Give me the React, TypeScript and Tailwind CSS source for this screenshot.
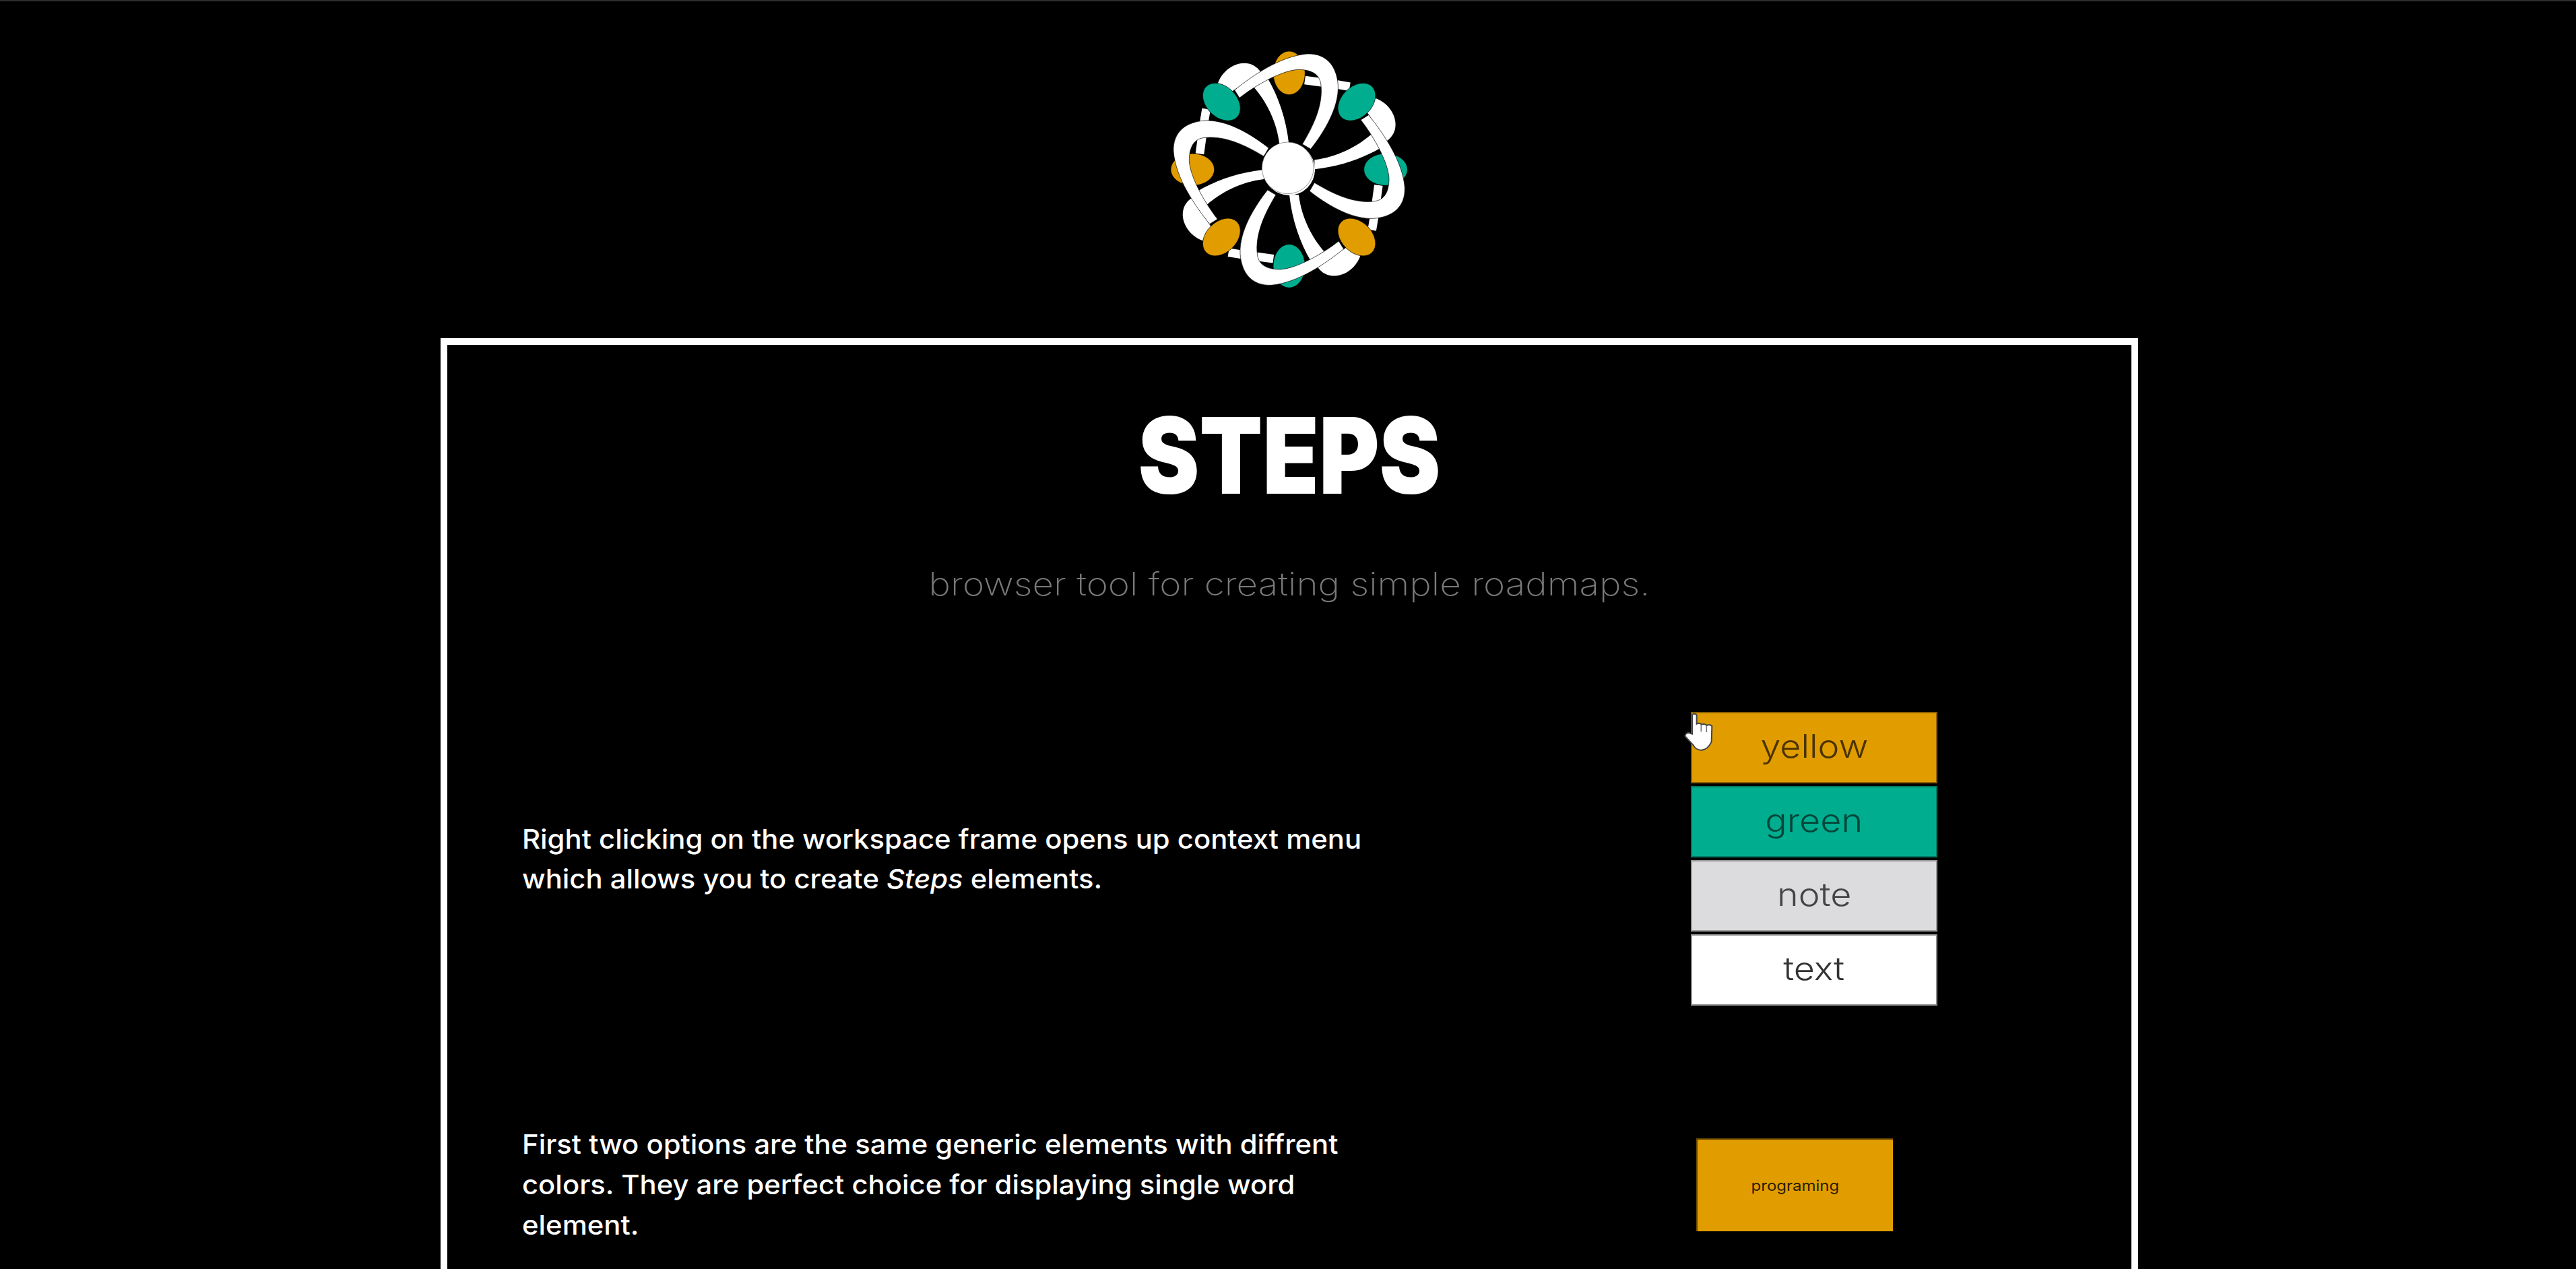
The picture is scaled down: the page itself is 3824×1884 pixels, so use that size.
const ORANGE = "#e19c00";
const GREEN = "#00ad8f";
const FONT = "font-['Inter',sans-serif]";

const units = [
  { angle: 0, half: ORANGE, diag: GREEN },
  { angle: 90, half: GREEN, diag: GREEN },
  { angle: 180, half: GREEN, diag: ORANGE },
  { angle: 270, half: ORANGE, diag: ORANGE },
];

function Logo() {
  return (
    <svg width="420" height="400" viewBox="0 0 1260 1200" className="block">
      {units.map((u) => (
        <g key={"b" + u.angle} transform={`rotate(${u.angle} 641 605)`}>
          <path d="M322,226 C350,135 465,95 515,172 L385,258 Z" fill="#fff" />
          <path d="M485,240 C538,300 586,390 598,492 L640,492 C628,380 593,280 545,198 Z" fill="#fff" />
          <path d="M272,335 L262,395 L243,535" fill="none" stroke="#fff" strokeWidth="38" />
        </g>
      ))}
      {units.map((u) => (
        <g key={"h" + u.angle} transform={`rotate(${u.angle} 641 605)`}>
          <ellipse cx="641" cy="175" rx="71" ry="97" fill={u.half} stroke="#000" strokeWidth="2" />
        </g>
      ))}
      {units.map((u) => (
        <g key={"f" + u.angle} transform={`rotate(${u.angle} 641 605)`}>
          <path
            d="M700,492 C743,420 796,320 782,222 C774,174 730,160 680,160 C610,164 500,224 420,286 L398,251 C480,186 600,101 720,90 C812,86 854,150 859,230 C864,330 794,442 737,514 Z"
            fill="#fff"
            stroke="#000"
            strokeWidth="2"
          />
        </g>
      ))}
      {units.map((u) => (
        <g key={"d" + u.angle} transform={`rotate(${u.angle} 641 605)`}>
          <ellipse cx="340" cy="304" rx="97" ry="68" transform="rotate(45 340 304)" fill={u.diag} stroke="#000" strokeWidth="2" />
        </g>
      ))}
      <circle cx="641" cy="605" r="115" fill="#fff" />
      <circle cx="635" cy="598" r="115" fill="#fff" stroke="#666" strokeWidth="2" />
    </svg>
  );
}

function Hand() {
  return (
    <svg width="60" height="80" viewBox="0 0 180 240" className="absolute left-[-20px] top-[-16px]">
      <path
        d="M60,140 L60,55 Q70,45 80,55 L80,95 Q92,88 102,98 Q115,92 125,102 Q138,95 148,105 L146,175 Q130,210 100,212 Q75,210 65,190 L28,150 Q30,135 45,135 Z"
        fill="#fff"
        stroke="#444"
        strokeWidth="6"
      />
      <path d="M100,100 L100,130 M124,104 L124,132" stroke="#777" strokeWidth="5" fill="none" />
    </svg>
  );
}

function MenuItem({ label, bg, border, text, children }: { label: string; bg: string; border: string; text: string; children?: React.ReactNode }) {
  return (
    <div className={`relative flex h-[106px] items-center justify-center border-2 pb-[4px] ${bg} ${border} ${text} text-[48px] font-light`}>
      <span className="inline-block scale-x-[1.12]">{label}</span>
      {children}
    </div>
  );
}

export default function App() {
  return (
    <div className={`h-[1884px] overflow-hidden bg-black text-white ${FONT}`}>
      <div className="h-[2px] bg-[#2e2e2e]" />
      <div className="flex justify-center pt-[48px] pr-[4px] pb-[52px]">
        <Logo />
      </div>
      <div className="ml-[654px] h-[1600px] w-[2520px] border-[10px] border-white pt-[86px] pl-[111px]">
        <div className="-ml-[111px]">
          <h1 className="scale-x-[0.87] text-center text-[157px] leading-[157px] font-black">STEPS</h1>
          <p className="mt-[82px] scale-x-[1.144] text-center text-[48px] leading-[60px] font-extralight text-[#7a7a7a]">
            browser tool for creating simple roadmaps.
          </p>
        </div>
        <div className="mt-[161px] flex h-[434px] items-center">
          <p className="w-[1234px] origin-left scale-x-[1.045] text-[40px] leading-[59px] font-medium">
            Right clicking on the workspace frame opens up context menu which allows you to create <em>Steps</em> elements.
          </p>
          <div className="ml-[501px] flex w-[366px] flex-col gap-[4px] blur-[0.5px]">
            <MenuItem label="yellow" bg="bg-[#e19c00]" border="border-[#8a6000]" text="text-[#4a3300]">
              <Hand />
            </MenuItem>
            <MenuItem label="green" bg="bg-[#00ad8f]" border="border-[#007a66]" text="text-[#04463a]" />
            <MenuItem label="note" bg="bg-[#dcdcde]" border="border-[#9a9a9a]" text="text-[#444444]" />
            <MenuItem label="text" bg="bg-white" border="border-[#8c8c8c]" text="text-[#333333]" />
          </div>
        </div>
        <div className="mt-[177px] flex h-[180px] items-center">
          <p className="w-[1234px] origin-left scale-x-[1.045] text-[40px] leading-[60px] font-medium">
            First two options are the same generic elements with diffrent colors. They are perfect choice for displaying single word element.
          </p>
          <div className="ml-[509px] flex h-[138px] w-[292px] items-center justify-center border-t-2 border-l-2 border-[#6b4a00] bg-[#e19c00] text-[22px] text-[#2a1c00]">
            <span className="inline-block scale-x-[1.09]">programing</span>
          </div>
        </div>
      </div>
    </div>
  );
}
